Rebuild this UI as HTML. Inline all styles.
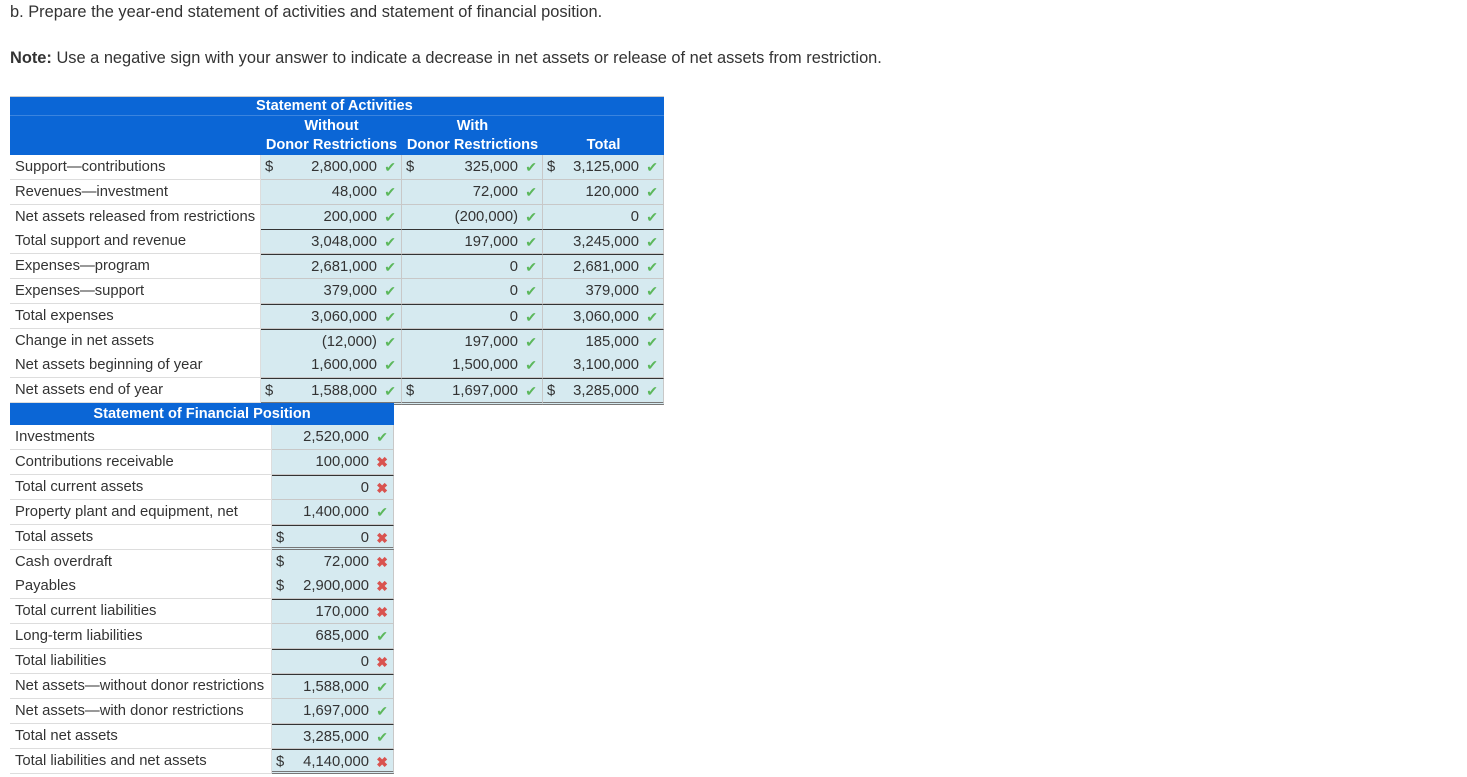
<!DOCTYPE html><html><head><style>
body{margin:0;width:1467px;height:777px;background:#fff;font-family:"Liberation Sans",sans-serif;color:#333;position:relative;overflow:hidden}
.a{position:absolute;white-space:nowrap}
.t{font-size:16.4px;color:#333}
.hd{position:absolute;background:#0b66d6;color:#fff;font-weight:bold;font-size:14.6px;text-align:center}
.l{position:absolute;font-size:14.8px;padding-left:5px;box-sizing:border-box;border-bottom:1px solid #ddd;border-right:1px solid #ddd;background:#fff;line-height:25px;white-space:nowrap}
.c{position:absolute;background:#d6eaf0;border-right:1px solid #c8c8c8;border-bottom:1px solid #c8c8c8;box-sizing:border-box;font-size:14.8px;line-height:25px}
.c .v{position:absolute;right:24px;top:0}
.c .d{position:absolute;left:4px;top:0}
.c .k{position:absolute;right:5px;top:0;font-size:14px}
.ok{color:#5cb85c}.no{color:#d9534f;font-weight:bold}
.tb{border-top:1.5px solid #333}
.db{border-bottom:3px double #777}
</style></head><body>
<div class="a t" style="left:10px;top:3px">b. Prepare the year-end statement of activities and statement of financial position.</div>
<div class="a t" style="left:10px;top:49px"><b>Note:</b> Use a negative sign with your answer to indicate a decrease in net assets or release of net assets from restriction.</div>

<div class="hd" style="left:10px;top:96px;width:654px;height:59px;border-top:1px solid #ccc"></div>
<div class="hd" style="left:10px;top:97px;width:654px;height:18px;line-height:18px;border-bottom:1px solid #3b84de"><span style="position:absolute;left:246px">Statement of Activities</span></div>
<div class="hd" style="left:261px;top:117px;width:141px;line-height:19px">Without<br>Donor Restrictions</div>
<div class="hd" style="left:402px;top:117px;width:141px;line-height:19px">With<br>Donor Restrictions</div>
<div class="hd" style="left:543px;top:136px;width:121px;line-height:19px">Total</div>

<div id="t1"></div>
<div class="hd" style="left:10px;top:403px;width:384px;height:22px;line-height:22px">Statement of Financial Position</div>
<script>
const r1=[["Support—contributions",["$","2,800,000",1],["$","325,000",1],["$","3,125,000",1],""],
["Revenues—investment",["","48,000",1],["","72,000",1],["","120,000",1],""],
["Net assets released from restrictions",["","200,000",1],["","(200,000)",1],["","0",1],""],
["Total support and revenue",["","3,048,000",1],["","197,000",1],["","3,245,000",1],"tb"],
["Expenses—program",["","2,681,000",1],["","0",1],["","2,681,000",1],"tb"],
["Expenses—support",["","379,000",1],["","0",1],["","379,000",1],""],
["Total expenses",["","3,060,000",1],["","0",1],["","3,060,000",1],"tb"],
["Change in net assets",["","(12,000)",1],["","197,000",1],["","185,000",1],"tb"],
["Net assets beginning of year",["","1,600,000",1],["","1,500,000",1],["","3,100,000",1],""],
["Net assets end of year",["$","1,588,000",1],["$","1,697,000",1],["$","3,285,000",1],"tb db"]];
const xs=[261,402,543,664];let h="";
r1.forEach((r,i)=>{const y=155+i*24.8;
h+=`<div class="l" style="left:10px;top:${y}px;width:251px;height:25px">${r[0]}</div>`;
for(let j=0;j<3;j++){const c=r[j+1];h+=`<div class="c ${r[4]}" style="left:${xs[j]}px;top:${y}px;width:${xs[j+1]-xs[j]}px;height:${i==9?27:25}px"><span class="d">${c[0]}</span><span class="v">${c[1]}</span><span class="k ${c[2]?'ok':'no'}">${c[2]?'✔':'✖'}</span></div>`;}
});
const r2=[["Investments","","2,520,000",1,""],["Contributions receivable","","100,000",0,""],["Total current assets","","0",0,"tb"],
["Property plant and equipment, net","","1,400,000",1,""],["Total assets","$","0",0,"tb db"],["Cash overdraft","$","72,000",0,""],
["Payables","$","2,900,000",0,""],["Total current liabilities","","170,000",0,"tb"],["Long-term liabilities","","685,000",1,""],
["Total liabilities","","0",0,"tb"],["Net assets—without donor restrictions","","1,588,000",1,"tb"],["Net assets—with donor restrictions","","1,697,000",1,""],
["Total net assets","","3,285,000",1,"tb"],["Total liabilities and net assets","$","4,140,000",0,"tb db"]];
r2.forEach((r,i)=>{const y=425+i*24.9;
h+=`<div class="l" style="left:10px;top:${y}px;width:262px;height:25px">${r[0]}</div>`;
h+=`<div class="c ${r[4]}" style="left:272px;top:${y}px;width:122px;height:25px"><span class="d">${r[1]}</span><span class="v">${r[2]}</span><span class="k ${r[3]?'ok':'no'}">${r[3]?'✔':'✖'}</span></div>`;});
document.getElementById('t1').innerHTML=h;
</script>
</body></html>
